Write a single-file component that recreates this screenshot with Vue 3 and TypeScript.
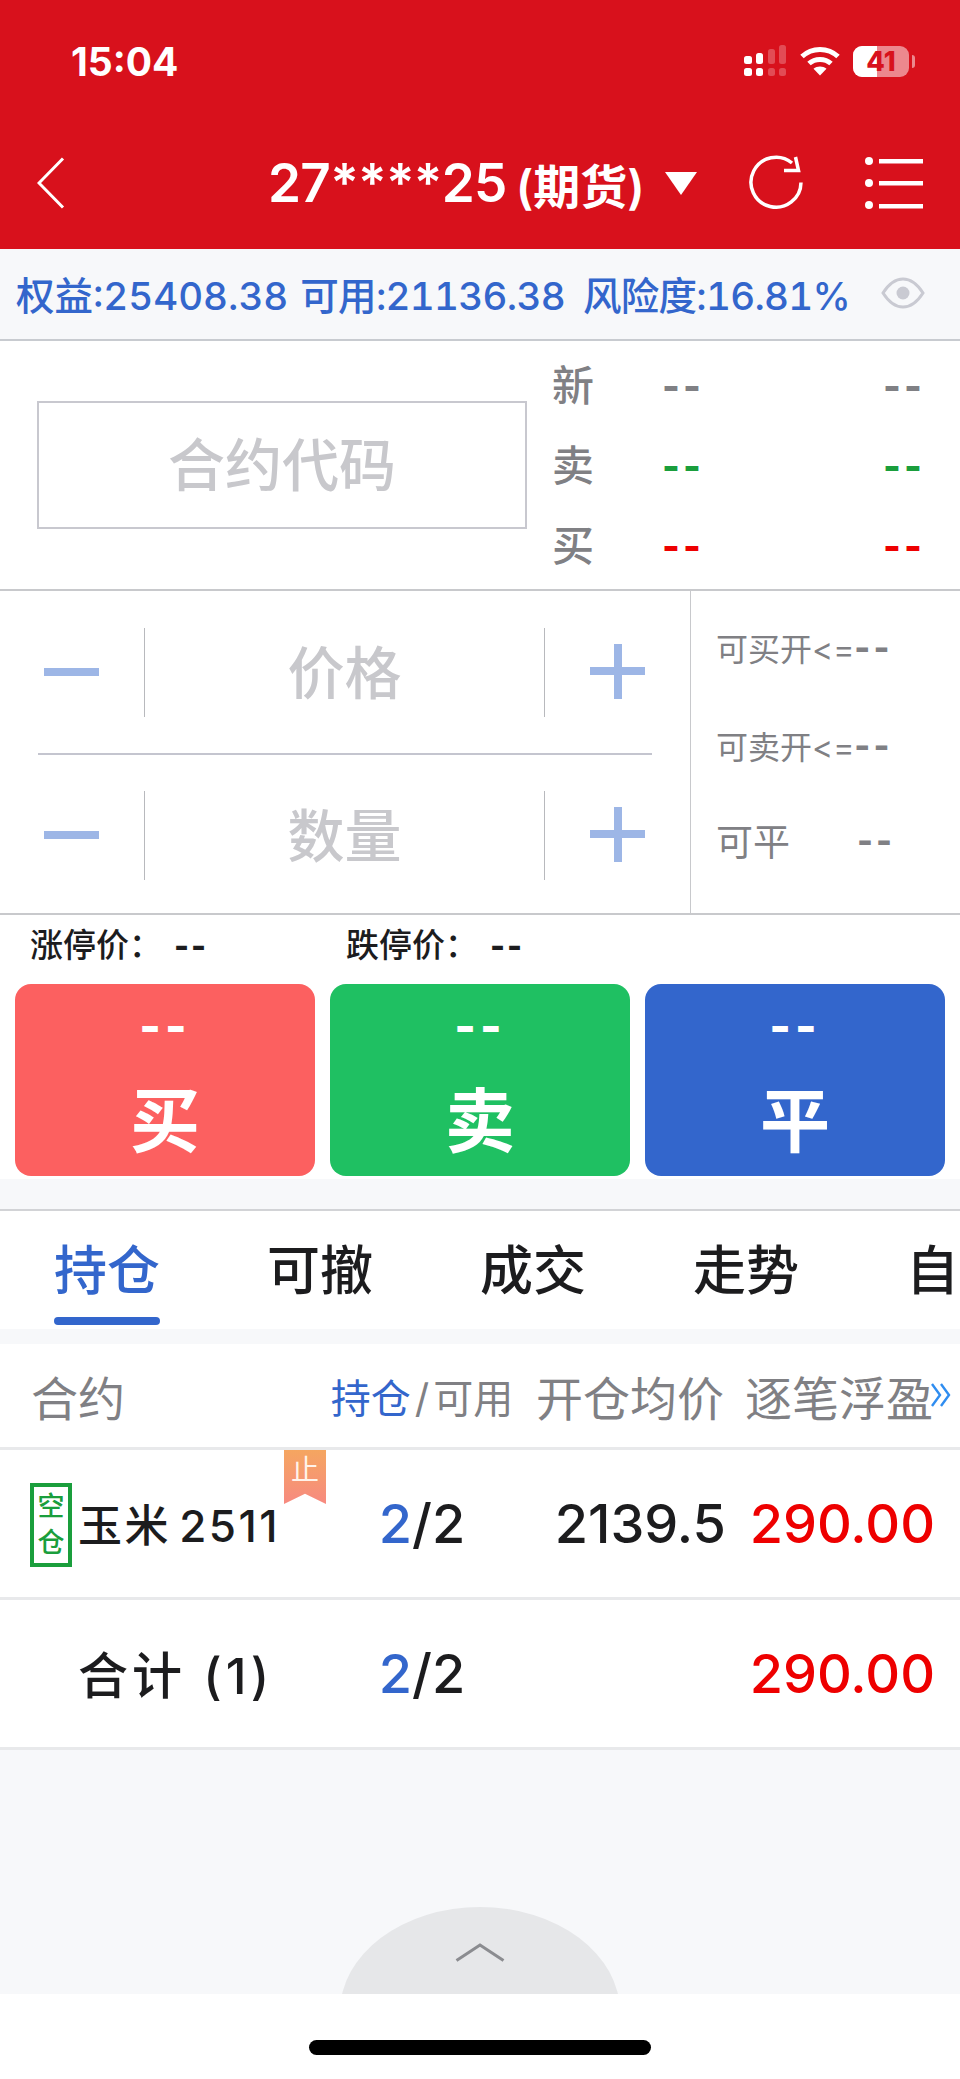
<template>
  <div class="page">
    <header class="top">
      <div class="status">
        <span class="time">15:04</span>
        <div class="status-icons">
          <svg class="signal" width="44" height="32" viewBox="0 0 44 32" fill="#fff">
            <rect x="0" y="11" width="8" height="8" rx="2.5" />
            <rect x="12" y="8" width="7" height="11" rx="2.5" />
            <rect x="24" y="4" width="7" height="15" rx="2.5" opacity=".25" />
            <rect x="35" y="0" width="7" height="19" rx="2.5" opacity=".25" />
            <rect x="0" y="23" width="8" height="8" rx="2.5" />
            <rect x="12" y="23" width="7" height="8" rx="2.5" />
            <rect x="24" y="23" width="7" height="8" rx="2.5" opacity=".25" />
            <rect x="35" y="23" width="7" height="8" rx="2.5" opacity=".25" />
          </svg>
          <svg class="wifi" width="40" height="30" viewBox="0 0 40 30" fill="none" stroke="#fff" stroke-width="5">
            <path d="M2 10.5C12 1 28 1 38 10.5" />
            <path d="M9 17.5C15 12 25 12 31 17.5" />
            <path d="M20 29.5l-6.5-6.8c3.6-3 9.4-3 13 0z" fill="#fff" stroke="none" />
          </svg>
          <div class="battery"><i class="battery-fill"></i><span>41</span></div>
          <i class="battery-tip"></i>
        </div>
      </div>
      <div class="nav">
        <svg class="back" width="28" height="52" viewBox="0 0 28 52" fill="none" stroke="#fff" stroke-width="3">
          <path d="M26 1.5L2 26l24 24.5" />
        </svg>
        <div class="title">
          <span class="title-no">27****25</span>
          <span class="title-type">(期货)</span>
          <svg class="caret" width="32" height="23" viewBox="0 0 32 23" fill="#fff"><path d="M0 0h32L16 23z" /></svg>
        </div>
        <svg class="refresh" width="56" height="56" viewBox="0 0 56 56" fill="none" stroke="#fff" stroke-width="3.5">
          <path d="M53 27.5A25 25 0 1 1 44 8" />
          <path d="M36 15.5h14.5L47.5 2" />
        </svg>
        <svg class="menu" width="58" height="52" viewBox="0 0 58 52" fill="#fff">
          <circle cx="4" cy="4" r="4" /><rect x="14" y="2" width="44" height="4.5" />
          <circle cx="4" cy="26" r="4" /><rect x="14" y="24" width="44" height="4.5" />
          <circle cx="4" cy="48" r="4" /><rect x="14" y="47" width="44" height="4.5" />
        </svg>
      </div>
    </header>

    <div class="account">
      <span>权益:25408.38</span>
      <span class="acc-2">可用:21136.38</span>
      <span class="acc-3">风险度:16.81%</span>
      <svg class="eye" width="44" height="32" viewBox="0 0 44 32" fill="none">
        <path d="M2 16C9 5 15 2 22 2s13 3 20 14c-7 11-13 14-20 14S9 27 2 16z" stroke="#c9cad2" stroke-width="3" />
        <circle cx="22" cy="16" r="6.5" fill="#c9cad2" />
      </svg>
    </div>

    <section class="quote">
      <div class="contract">合约代码</div>
      <div class="quote-list">
        <div v-for="q in quotes" :key="q.label" class="quote-row">
          <span class="quote-label">{{ q.label }}</span>
          <span class="dash" :class="q.tone">--</span>
          <span class="dash" :class="q.tone">--</span>
        </div>
      </div>
    </section>

    <section class="order">
      <div class="steppers">
        <div v-for="(s, i) in steppers" :key="s" class="stepper" :class="{ first: i === 0 }">
          <div class="step-btn"><i class="bar"></i></div>
          <div class="step-value">{{ s }}</div>
          <div class="step-btn"><i class="bar"></i><i class="bar vert"></i></div>
        </div>
      </div>
      <div class="avail">
        <div class="avail-row small">可买开&lt;=<b class="avail-dash">--</b></div>
        <div class="avail-row small second">可卖开&lt;=<b class="avail-dash">--</b></div>
        <div class="avail-row big"><span>可平</span><b class="avail-dash">--</b></div>
      </div>
    </section>

    <div class="limits">
      <span class="limit-item">涨停价：<b>--</b></span>
      <span class="limit-item">跌停价：<b>--</b></span>
    </div>

    <div class="actions">
      <button v-for="a in actions" :key="a.text" class="action" :class="a.cls">
        <span class="action-price">--</span>
        <span class="action-text">{{ a.text }}</span>
      </button>
    </div>

    <nav class="tabs">
      <div v-for="(t, i) in tabs" :key="t" class="tab" :class="{ active: i === 0 }">{{ t }}</div>
    </nav>

    <div class="table">
      <div class="t-row t-head">
        <span class="c-name">合约</span>
        <span class="c-pos"><em>持仓</em><i>/</i>可用</span>
        <span class="c-right">开仓均价</span>
        <span class="c-right">逐笔浮盈</span>
        <svg class="more" width="22" height="26" viewBox="0 0 22 26" fill="none" stroke="#2f8df0" stroke-width="2.4">
          <path d="M2 2l8 11-8 11M11 2l8 11-8 11" />
        </svg>
      </div>
      <div v-for="r in rows" :key="r.name" class="t-row t-body">
        <div class="c-name name-cell">
          <span v-if="r.tag" class="tag">{{ r.tag }}</span>
          <span class="name" :class="{ total: !r.tag }">{{ r.name }}</span>
          <span v-if="r.stop" class="ribbon">止</span>
        </div>
        <div class="c-pos num"><em>2</em>/2</div>
        <div class="c-right num">{{ r.price }}</div>
        <div class="c-right num profit">{{ r.profit }}</div>
      </div>
    </div>

    <div class="spacer"></div>
    <div class="handle">
      <svg width="50" height="19" viewBox="0 0 50 19" fill="none" stroke="#8b8c90" stroke-width="3">
        <path d="M1.5 17.5L25 2l23.5 15.5" />
      </svg>
    </div>
    <div class="home"><i class="home-bar"></i></div>
  </div>
</template>

<script setup lang="ts">
interface Row {
  name: string
  tag?: string
  stop?: boolean
  price: string
  profit: string
}

const quotes = [
  { label: '新', tone: 'gray' },
  { label: '卖', tone: 'green' },
  { label: '买', tone: 'red' },
]
const steppers = ['价格', '数量']
const actions = [
  { text: '买', cls: 'buy' },
  { text: '卖', cls: 'sell' },
  { text: '平', cls: 'close' },
]
// 最后一个标签在屏幕边缘只露出一个字
const tabs = ['持仓', '可撤', '成交', '走势', '自']
const rows: Row[] = [
  { name: '玉米 2511', tag: '空仓', stop: true, price: '2139.5', profit: '290.00' },
  { name: '合计 (1)', price: '', profit: '290.00' },
]
</script>

<style>
html,
body {
  margin: 0;
  background: #f7f8fa;
}
</style>

<style scoped>
.page {
  width: 960px;
  height: 2079px;
  overflow: hidden;
  display: flex;
  flex-direction: column;
  background: #f7f8fa;
  color: #1c1c1e;
  font-family: Inter, "Noto Sans CJK SC", sans-serif;
}

.top {
  height: 249px;
  background: #d8111c;
  color: #fff;
  display: flex;
  flex-direction: column;
}
.status {
  height: 122px;
  display: flex;
  align-items: center;
  padding-left: 71px;
}
.time {
  font-size: 39px;
  font-weight: 700;
}
.status-icons {
  margin-left: auto;
  margin-right: 45px;
  display: flex;
  align-items: center;
}
.signal {
  margin-right: 12px;
}
.wifi {
  margin-right: 13px;
}
.battery {
  position: relative;
  width: 56px;
  height: 31px;
  border-radius: 9px;
  overflow: hidden;
  background: rgba(255, 255, 255, 0.5);
  display: flex;
  align-items: center;
  justify-content: center;
  color: #d8111c;
  font-size: 27px;
  font-weight: 800;
}
.battery-fill {
  position: absolute;
  left: 0;
  top: 0;
  bottom: 0;
  width: 24px;
  background: #fff;
}
.battery span {
  position: relative;
}
.battery-tip {
  width: 3px;
  height: 13px;
  margin-left: 3px;
  border-radius: 0 3px 3px 0;
  background: rgba(255, 255, 255, 0.5);
}
.nav {
  display: flex;
  align-items: center;
  height: 62px;
  margin-top: 30px;
  padding-left: 37px;
}
.title {
  margin-left: 203px;
  display: flex;
  align-items: center;
  font-weight: 600;
}
.title-no {
  font-size: 53px;
  letter-spacing: -0.7px;
}
.title-type {
  font-size: 47px;
  margin-left: 9px;
}
.caret {
  margin-left: 20px;
}
.refresh {
  margin-left: 51px;
}
.menu {
  margin-left: 61px;
}

.account {
  height: 87px;
  padding-bottom: 3px;
  border-bottom: 2px solid #c8cbd0;
  padding-left: 16px;
  display: flex;
  align-items: center;
  color: #3366cc;
  font-size: 38.5px;
  font-weight: 500;
  font-variant-numeric: tabular-nums;
  white-space: nowrap;
}
.acc-2 {
  margin-left: 12px;
  letter-spacing: -0.7px;
}
.acc-3 {
  margin-left: 18px;
  letter-spacing: -0.7px;
}
.eye {
  margin-left: auto;
  margin-right: 35px;
}

.quote {
  height: 248px;
  background: #fff;
  border-bottom: 2px solid #c8c9cc;
  display: flex;
  align-items: center;
  padding-left: 37px;
}
.contract {
  box-sizing: border-box;
  width: 490px;
  height: 128px;
  padding-bottom: 8px;
  border: 2px solid #c8c8cf;
  display: flex;
  align-items: center;
  justify-content: center;
  color: #c8c8cc;
  font-size: 57px;
  font-weight: 500;
}
.quote-list {
  margin-left: 25px;
  margin-top: 2px;
  width: 370px;
  display: grid;
  gap: 38px;
}
.quote-row {
  display: grid;
  grid-template-columns: 110px 221px 36px;
  align-items: center;
  height: 42px;
  white-space: nowrap;
}
.quote-label {
  font-size: 42px;
  font-weight: 500;
  color: #808084;
  line-height: 42px;
}
.dash {
  font-size: 38px;
  font-weight: 800;
  letter-spacing: 3px;
  line-height: 42px;
}
.gray {
  color: #808084;
}
.green {
  color: #1a9e3c;
}
.red {
  color: #ee0000;
}

.order {
  height: 322px;
  background: #fff;
  border-bottom: 2px solid #c8c9cc;
  display: flex;
}
.steppers {
  box-sizing: border-box;
  width: 691px;
  border-right: 1px solid #c8c9cc;
  padding: 37px 38px 0 38px;
}
.stepper {
  height: 89px;
  display: grid;
  grid-template-columns: 106px 401px 1fr;
  margin-right: -4px;
}
.stepper.first {
  margin-bottom: 74px;
  position: relative;
}
.stepper.first::after {
  content: "";
  position: absolute;
  left: 0;
  right: 4px;
  bottom: -38px;
  height: 2px;
  background: #c4c5cf;
}
.step-btn {
  position: relative;
}
.step-btn .bar {
  position: absolute;
  left: 6px;
  top: 40px;
  width: 55px;
  height: 8px;
  background: #9db6e6;
}
.step-btn:last-child .bar {
  left: 45px;
  top: 39px;
}
.step-btn:last-child .bar.vert {
  left: 69px;
  top: 16px;
  width: 8px;
  height: 55px;
}
.step-value {
  padding-bottom: 7px;
  box-sizing: border-box;
  border-left: 1px solid #b8b9bd;
  border-right: 1px solid #b8b9bd;
  display: flex;
  align-items: center;
  justify-content: center;
  color: #c8c8cc;
  font-size: 57px;
  font-weight: 500;
}
.avail {
  flex: 1;
  padding: 31px 0 0 25px;
  color: #808084;
}
.avail-row {
  display: flex;
  align-items: center;
}
.avail-row.small {
  font-size: 32px;
  height: 50px;
}
.avail-row.second {
  margin-top: 48px;
}
.avail-row.big {
  font-size: 37px;
  height: 50px;
  margin-top: 45px;
}
.avail-row.big span {
  width: 141px;
}
.avail-dash {
  font-size: 34px;
  font-weight: 800;
  letter-spacing: 3px;
}

.limits {
  height: 69px;
  padding-bottom: 14px;
  box-sizing: border-box;
  background: #fff;
  display: flex;
  align-items: center;
  padding-left: 30px;
  font-size: 33px;
}
.limit-item {
  width: 316px;
  font-weight: 500;
}
.limit-item b {
  margin-left: 12px;
  font-size: 32px;
  font-weight: 800;
  letter-spacing: 2px;
}

.actions {
  background: #fff;
  display: grid;
  grid-template-columns: repeat(3, 300px);
  gap: 15px;
  padding: 0 15px 3px;
}
.action {
  height: 192px;
  border: 0;
  border-radius: 16px;
  padding: 0;
  color: #fff;
  font-family: inherit;
  display: flex;
  flex-direction: column;
  align-items: center;
}
.buy {
  background: #fc6060;
}
.sell {
  background: #1fc062;
}
.close {
  background: #3366cc;
}
.action-price {
  margin-top: 18px;
  height: 48px;
  font-size: 46px;
  font-weight: 800;
  line-height: 48px;
  letter-spacing: 4px;
}
.action-text {
  margin-top: 34px;
  font-size: 70px;
  font-weight: 700;
  line-height: 76px;
}

.tabs {
  margin-top: 30px;
  height: 118px;
  margin-bottom: 15px;
  border-top: 2px solid #d2d3d6;
  background: #fff;
  display: flex;
  overflow: hidden;
  gap: 107px;
  padding-left: 54px;
  font-size: 53px;
  font-weight: 500;
}
.tab {
  position: relative;
  flex: none;
  padding-top: 27px;
  line-height: 66px;
  white-space: nowrap;
}
.tab.active {
  color: #3366cc;
}
.tab.active::after {
  content: "";
  position: absolute;
  left: 0;
  right: 0;
  top: 106px;
  height: 8px;
  border-radius: 4px;
  background: #3366cc;
}

.t-row {
  position: relative;
  display: grid;
  grid-template-columns: 330px 184px 210px 209px;
  align-items: center;
  background: #fff;
  border-bottom: 3px solid #e8e9eb;
}
.t-head {
  height: 103px;
  color: #808084;
  font-size: 47px;
}
.t-body {
  height: 147px;
}
.c-name {
  padding-left: 31px;
}
.c-pos {
  text-align: center;
  white-space: nowrap;
}
.c-right {
  text-align: right;
  white-space: nowrap;
}
.t-head .c-pos {
  font-size: 40px;
}
.t-head em {
  font-style: normal;
  color: #3366cc;
}
.t-head i {
  font-style: normal;
  margin: 0 4px;
}
.more {
  position: absolute;
  right: 8px;
  top: 38px;
}
.name-cell {
  position: relative;
  display: flex;
  align-items: center;
  padding-left: 30px;
  height: 147px;
}
.tag {
  box-sizing: border-box;
  width: 42px;
  height: 84px;
  margin-right: 9px;
  border: 4px solid #1a9e3c;
  color: #1a9e3c;
  font-size: 27px;
  font-weight: 500;
  line-height: 36px;
  text-align: center;
  padding-top: 2px;
  margin-top: 2px;
}
.name {
  position: absolute;
  left: 78px;
  top: 46px;
  font-size: 44px;
  font-weight: 500;
  letter-spacing: 2.5px;
  word-spacing: -6px;
  line-height: 60px;
  white-space: nowrap;
}
.name.total {
  font-size: 50px;
  letter-spacing: 4px;
  word-spacing: 0;
}
.ribbon {
  position: absolute;
  left: 284px;
  top: 0;
  width: 42px;
  height: 54px;
  padding-top: 4px;
  box-sizing: border-box;
  text-align: center;
  color: #fff3ea;
  font-size: 28px;
  line-height: 32px;
  background: linear-gradient(#f5a660, #f78a80);
  clip-path: polygon(0 0, 100% 0, 100% 100%, 50% 81%, 0 100%);
}
.num {
  font-size: 54px;
  font-weight: 500;
}
.c-right.num {
  margin-right: -2px;
}
.num em {
  font-style: normal;
  color: #3366cc;
}
.profit {
  color: #ee0000;
}

.spacer {
  flex: 1;
}
.handle {
  position: relative;
  flex: none;
  height: 87px;
  overflow: hidden;
  display: flex;
  justify-content: center;
  padding-top: 36px;
  box-sizing: border-box;
}
.handle::before {
  content: "";
  position: absolute;
  top: 0;
  left: 340px;
  width: 280px;
  height: 210px;
  border-radius: 50%;
  background: #e6e7e9;
}
.handle svg {
  position: relative;
}
.home {
  height: 85px;
  background: #fff;
  display: flex;
  justify-content: center;
  padding-top: 46px;
  box-sizing: border-box;
}
.home-bar {
  width: 342px;
  height: 15px;
  border-radius: 8px;
  background: #000;
}
</style>
